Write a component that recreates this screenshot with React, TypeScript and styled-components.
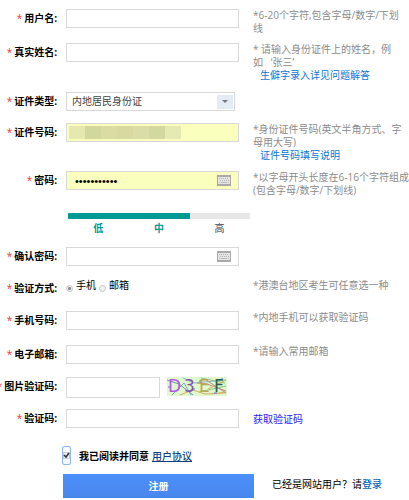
import React from 'react';
import styled, { createGlobalStyle } from 'styled-components';

const GlobalStyle = createGlobalStyle`
  * { box-sizing: border-box; }
  body {
    margin: 0;
    background: #fff;
    color: #000;
    overflow-x: hidden;
    font: 10px/13px "Open Sans", "Noto Sans CJK SC", sans-serif;
  }
  input, select, button { font: inherit; margin: 0; }
`;

const Form = styled.form`
  padding-top: 9px;
`;

const Row = styled.div<{ $height: number }>`
  display: grid;
  grid-template-columns: 57px minmax(0, 173fr) minmax(0, 161fr);
  column-gap: 9px;
  align-items: start;
  min-height: ${(p) => p.$height}px;
`;

const labelText = `
  display: flex;
  justify-content: flex-end;
  gap: 2px;
  line-height: 19px;
  font-weight: 700;
  white-space: nowrap;
`;

const Label = styled.label`
  ${labelText}
`;

const GroupLabel = styled.span`
  ${labelText}
`;

const Star = styled.span`
  color: #e33;
  font-weight: 400;
`;

const Box = styled.div<{ $filled?: boolean }>`
  display: flex;
  align-items: center;
  height: 19px;
  padding: 0 7px 0 2px;
  border: 1px solid #d9d9d9;
  background: ${(p) => (p.$filled ? '#faffbd' : '#fff')};
`;

const TextInput = styled.input`
  flex: 1;
  min-width: 0;
  height: 100%;
  padding: 0 6px;
  border: 0;
  outline: 0;
  background: transparent;
  color: #000;

  &[type='password'] {
    font: 11px "Liberation Sans", sans-serif;
  }
`;

const SelectBox = styled.div`
  display: grid;
  align-items: center;
  height: 19px;
  margin-right: 4px;
  border: 1px solid #d9d9d9;

  > * { grid-area: 1 / 1; }
`;

const Select = styled.select`
  appearance: none;
  width: 100%;
  height: 17px;
  padding: 0 20px 0 5px;
  border: 0;
  outline: 0;
  background: transparent;
  color: #444;
`;

const Arrow = styled.span`
  display: flex;
  align-items: center;
  justify-content: center;
  justify-self: end;
  width: 16px;
  height: 14px;
  margin-right: 1px;
  background: #e3ebf6;
  pointer-events: none;

  &::after {
    content: '';
    border: solid transparent;
    border-width: 3px 3px 0;
    border-top-color: #777;
  }
`;

const Mosaic = styled.span`
  display: flex;
  height: 13px;
`;

const Tile = styled.span<{ $tone: string }>`
  width: 16px;
  background: ${(p) => p.$tone};
`;

const Hint = styled.div`
  padding-left: 5px;
  color: #8c8c8c;
  white-space: nowrap;
`;

const HelpLink = styled.a`
  display: block;
  padding-left: 7px;
  color: #0877d8;
  text-decoration: none;
`;

const CodeLink = styled.a`
  color: #2a1cff;
  line-height: 21px;
  text-decoration: none;
`;

const Strength = styled.div`
  grid-column: 2 / 4;
  width: 53%;
  margin-left: 2px;
`;

const Track = styled.div`
  height: 6px;
  background: #e8e8e8;
`;

const Level = styled.div`
  width: 67%;
  height: 100%;
  background: #009a94;
`;

const Levels = styled.div`
  display: grid;
  grid-template-columns: repeat(3, 1fr);
  padding-top: 3px;
  text-align: center;
`;

const LevelName = styled.span<{ $on?: boolean }>`
  color: ${(p) => (p.$on ? '#009a94' : '#444')};
  font-weight: ${(p) => (p.$on ? 700 : 400)};
`;

const Choices = styled.div`
  display: flex;
  gap: 3px;
  white-space: nowrap;
`;

const Choice = styled.label`
  display: flex;
  align-items: center;
  gap: 3px;
  height: 13px;
`;

const Radio = styled.input`
  appearance: none;
  width: 7px;
  height: 7px;
  align-self: end;
  border: 1px solid #c4c4c4;
  border-radius: 50%;
  background: #f2f2f2;

  &:checked {
    background: radial-gradient(#8a8a8a 0 1px, #eee 2px);
  }
`;

const CaptchaLine = styled.div`
  display: flex;
  align-items: flex-start;
  gap: 7px;
  padding-right: 12px;

  > :first-child {
    flex: 1;
    min-width: 0;
    height: 21px;
  }

  > svg { flex: none; }
`;

const Agreement = styled.div`
  display: flex;
  align-items: flex-start;
  min-height: 28px;
  padding-left: 62px;
  font-weight: 700;
  line-height: 20px;
  white-space: nowrap;
`;

const CheckFrame = styled.span`
  display: flex;
  align-items: center;
  justify-content: center;
  width: 9px;
  height: 19px;
  margin-right: 8px;
  border: 1px solid #8db8fa;
  border-radius: 2px;
  box-shadow: inset 0 0 1px #8db8fa;
`;

const Checkbox = styled.input`
  appearance: none;
  width: 7px;
  height: 7px;
  border: 1px solid #ccc;
  background: #eee;
`;

const CheckArea = styled.span`
  display: grid;
  place-items: center;

  > * { grid-area: 1 / 1; }
  > svg { pointer-events: none; }
`;

const TermsLink = styled.a`
  margin-left: 3px;
  color: #123f80;
  font-weight: 500;
`;

const Actions = styled.div`
  display: grid;
  grid-template-columns: 191fr 137fr;
  column-gap: 18px;
  align-items: center;
  padding-left: 63px;
`;

const Submit = styled.button`
  height: 24px;
  border: 0;
  background: linear-gradient(#4d90fa, #4787ed);
  color: #fff;
  font-weight: 700;
  cursor: pointer;
`;

const LoginNote = styled.p`
  margin: 0 0 4px;
  white-space: nowrap;

  a {
    color: #0068b7;
    font-weight: 500;
    text-decoration: none;
  }
`;

const tones = ['#e5e9af', '#d1d79d', '#dadca3', '#d7d9a0', '#dadda7', '#d2d89f', '#e5eab2'];

function LabelBody({ text }: { text: string }) {
  return (
    <>
      <Star>*</Star>
      <span>{text}:</span>
    </>
  );
}

function Keyboard() {
  return (
    <svg width="14" height="11" viewBox="0 0 14 11" aria-hidden="true">
      <rect width="14" height="11" fill="#aaa" />
      <rect x="1" y="2" width="12" height="7" fill="#e4e4e4" />
      <path d="M2 3.5h10M3 5.5h9" stroke="#b4b4b4" strokeDasharray="1 1" />
      <path d="M2 7.5h1M4 7.5h6M11 7.5h1" stroke="#bbb" />
    </svg>
  );
}

function Captcha() {
  return (
    <svg width="60" height="19" viewBox="0 0 60 19" role="img" aria-label="图片验证码">
      <rect width="60" height="19" fill="#e0f7cf" />
      <g fill="none" strokeWidth="1">
        <path d="M0 3l12 4 14 11" stroke="#7096b0" />
        <path d="M5 18L17 6l7 12" stroke="#79a9b5" />
        <path d="M13 18l13-5 12 4 20-1" stroke="#d9ad62" />
        <path d="M16 1l11 5 32-3" stroke="#8abdd0" />
        <path d="M30 6l10 1 19 7" stroke="#c9876f" />
        <path d="M34 1l24 5M32 15l27-6" stroke="#84c788" />
        <path d="M41 12l18-9M45 17l14-2" stroke="#d7b45d" />
        <path d="M39 3l20 13" stroke="#b88a92" />
        <path d="M1 10h2M3 14h2M26 12h2M32 4h2M47 16h3M54 2h2" stroke="#5673d8" />
      </g>
      <g fontFamily="DejaVu Sans" fontSize="17">
        <text x="1" y="15" fill="#b45ae0">D</text>
        <text x="17" y="15" fill="#8053ad">3</text>
        <text x="32" y="15" fill="#bea94e">E</text>
        <text x="47" y="15" fill="#28624b">F</text>
      </g>
    </svg>
  );
}

function FieldRow(props: {
  id: string;
  label: string;
  height: number;
  hint?: React.ReactNode;
  children: React.ReactNode;
}) {
  return (
    <Row $height={props.height}>
      <Label htmlFor={props.id}><LabelBody text={props.label} /></Label>
      {props.children}
      <Hint>{props.hint}</Hint>
    </Row>
  );
}

export default function App() {
  return (
    <>
      <GlobalStyle />
      <Form onSubmit={(e) => e.preventDefault()}>
        <FieldRow id="user" label="用户名" height={34} hint={<>*6-20个字符,包含字母/数字/下划<br />线</>}>
          <Box><TextInput id="user" /></Box>
        </FieldRow>
        <FieldRow
          id="name"
          label="真实姓名"
          height={49}
          hint={<>* 请输入身份证件上的姓名，例<br />如&nbsp;&nbsp; ‘张三’<HelpLink href="#name-help">生僻字录入详见问题解答</HelpLink></>}
        >
          <Box><TextInput id="name" /></Box>
        </FieldRow>
        <FieldRow id="id-type" label="证件类型" height={31}>
          <SelectBox>
            <Select id="id-type"><option>内地居民身份证</option></Select>
            <Arrow />
          </SelectBox>
        </FieldRow>
        <FieldRow
          id="id-number"
          label="证件号码"
          height={48}
          hint={<>*身份证件号码(英文半角方式、字<br />母用大写)<HelpLink href="#id-help">证件号码填写说明</HelpLink></>}
        >
          <Box $filled>
            <Mosaic>{tones.map((tone) => <Tile key={tone} $tone={tone} />)}</Mosaic>
            <TextInput id="id-number" />
          </Box>
        </FieldRow>
        <FieldRow id="password" label="密码" height={42} hint={<>*以字母开头长度在6-16个字符组成<br />(包含字母/数字/下划线)</>}>
          <Box $filled>
            <TextInput id="password" type="password" defaultValue="abcdefgh123" />
            <Keyboard />
          </Box>
        </FieldRow>
        <Row $height={34}>
          <Strength>
            <Track><Level /></Track>
            <Levels>
              <LevelName $on>低</LevelName>
              <LevelName $on>中</LevelName>
              <LevelName>高</LevelName>
            </Levels>
          </Strength>
        </Row>
        <FieldRow id="confirm" label="确认密码" height={32}>
          <Box><TextInput id="confirm" type="password" /><Keyboard /></Box>
        </FieldRow>
        <Row $height={32} role="radiogroup" aria-labelledby="method">
          <GroupLabel id="method"><LabelBody text="验证方式" /></GroupLabel>
          <Choices>
            <Choice><Radio type="radio" name="method" defaultChecked />手机</Choice>
            <Choice><Radio type="radio" name="method" />邮箱</Choice>
          </Choices>
          <Hint>*港澳台地区考生可任意选一种</Hint>
        </Row>
        <FieldRow id="phone" label="手机号码" height={34} hint="*内地手机可以获取验证码">
          <Box><TextInput id="phone" type="tel" /></Box>
        </FieldRow>
        <FieldRow id="email" label="电子邮箱" height={32} hint="*请输入常用邮箱">
          <Box><TextInput id="email" type="email" /></Box>
        </FieldRow>
        <FieldRow id="captcha" label="图片验证码" height={32}>
          <CaptchaLine>
            <Box><TextInput id="captcha" /></Box>
            <Captcha />
          </CaptchaLine>
        </FieldRow>
        <FieldRow id="code" label="验证码" height={37} hint={<CodeLink href="#code">获取验证码</CodeLink>}>
          <Box><TextInput id="code" /></Box>
        </FieldRow>
        <Agreement>
          <CheckFrame>
            <CheckArea>
              <Checkbox id="agree" type="checkbox" defaultChecked />
              <svg width="7" height="7" viewBox="0 0 7 7" aria-hidden="true">
                <path d="M1 3l2 2 3-4" fill="none" stroke="#333" strokeWidth="1.5" />
              </svg>
            </CheckArea>
          </CheckFrame>
          <label htmlFor="agree">我已阅读并同意</label>
          <TermsLink href="#terms">用户协议</TermsLink>
        </Agreement>
        <Actions>
          <Submit type="submit">注册</Submit>
          <LoginNote>已经是网站用户？请<a href="#login">登录</a></LoginNote>
        </Actions>
      </Form>
    </>
  );
}
